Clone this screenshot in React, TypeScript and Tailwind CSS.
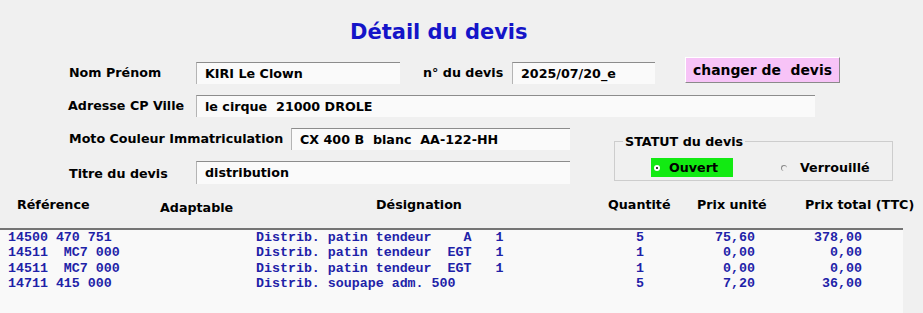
import React from 'react';

const lignes = [
  { ref: '14500 470 751', des: 'Distrib. patin tendeur    A   1', qte: '5', pu: '75,60', pt: '378,00' },
  { ref: '14511  MC7 000', des: 'Distrib. patin tendeur  EGT   1', qte: '1', pu: '0,00', pt: '0,00' },
  { ref: '14511  MC7 000', des: 'Distrib. patin tendeur  EGT   1', qte: '1', pu: '0,00', pt: '0,00' },
  { ref: '14711 415 000', des: 'Distrib. soupape adm. 500', qte: '5', pu: '7,20', pt: '36,00' },
];

function Champ({ value, className }: { value: string; className: string }) {
  return (
    <div
      className={`h-[22px] bg-[#fafafa] border-t border-l border-t-[#8c8c8c] border-l-[#b4b4b4] pl-[8px] leading-[21px] whitespace-pre ${className}`}
    >
      {value}
    </div>
  );
}

export default function App() {
  return (
    <div
      className="w-[923px] h-[313px] overflow-hidden bg-[#f0f0f0] text-black font-bold text-[12.7px]"
      style={{ fontFamily: '"DejaVu Sans", Verdana, sans-serif' }}
    >
      {/* Titre */}
      <h1 className="pt-[19px] pl-[350px] text-[21px] leading-[26px] text-[#1414c8] font-bold">Détail du devis</h1>

      {/* Nom / n° devis */}
      <div className="mt-[12px] flex items-start">
        <div className="mt-[5px] w-[196px] pl-[69px] leading-[22px]">Nom Prénom</div>
        <Champ value="KIRI Le Clown" className="mt-[5px] w-[204px]" />
        <div className="mt-[5px] ml-[23px] w-[89px] leading-[22px]">n° du devis</div>
        <Champ value="2025/07/20_e" className="mt-[5px] w-[143px]" />
        <button className="ml-[30px] w-[155px] h-[26px] bg-[#f7c3f7] border border-t-white border-l-white border-r-[#8a8a8a] border-b-[#8a8a8a] font-bold text-[13.9px] whitespace-pre leading-[22px]">
          changer de  devis
        </button>
      </div>

      {/* Adresse */}
      <div className="mt-[11px] flex items-center">
        <div className="w-[196px] pl-[68px]">Adresse CP Ville</div>
        <Champ value="le cirque  21000 DROLE" className="w-[619px]" />
      </div>

      <div className="flex">
        <div>
          <div className="mt-[11px] flex items-center">
            <div className="w-[291px] pl-[69px]">Moto Couleur Immatriculation</div>
            <Champ value="CX 400 B  blanc  AA-122-HH" className="w-[279px]" />
          </div>
          <div className="mt-[11px] flex items-center">
            <div className="w-[196px] pl-[69px] pt-[2px]">Titre du devis</div>
            <Champ value="distribution" className="w-[374px] h-[23px]" />
          </div>
        </div>

        {/* Statut */}
        <fieldset className="ml-[44px] mt-[17px] w-[279px] h-[47px] border border-[#cdcdcd]">
          <legend className="ml-[8px] px-[2px] leading-[15px]">STATUT du devis</legend>
          <div className="mt-[9px] flex items-center">
            <div className="ml-[36px] w-[82px] h-[19px] bg-[#12ea12] flex items-center">
              <span className="ml-[3px] w-[6px] h-[6px] rounded-full bg-white flex items-center justify-center">
                <span className="w-[2px] h-[2px] rounded-full bg-black" />
              </span>
              <span className="ml-[9px] leading-[19px]">Ouvert</span>
            </div>
            <span className="ml-[48px] w-[6px] h-[6px] rounded-full border-t border-l border-[#8a8a8a]" />
            <span className="ml-[13px] leading-[19px]">Verrouillé</span>
          </div>
        </fieldset>
      </div>

      {/* En-têtes */}
      <div className="mt-[13px] flex items-start pl-[17px] leading-[16px]">
        <div className="w-[143px]">Référence</div>
        <div className="w-[216px] mt-[3px]">Adaptable</div>
        <div className="w-[232px]">Désignation</div>
        <div className="w-[89px]">Quantité</div>
        <div className="w-[108px]">Prix unité</div>
        <div>Prix total (TTC)</div>
      </div>

      {/* Lignes */}
      <div className="mt-[12px] w-[903px] h-[100px] border-t-2 border-[#747474] bg-[#f9f9f9]">
        {lignes.map((l, i) => (
          <div
            key={i}
            className="flex whitespace-pre text-[#1e22a8] text-[13.3px] leading-[15.4px]"
            style={{ fontFamily: '"Liberation Mono", "Courier New", monospace' }}
          >
            <div className="w-[256px] pl-[8px]">{l.ref}</div>
            <div className="w-[380px]">{l.des}</div>
            <div className="w-[64px]">{l.qte}</div>
            <div className="w-[55px] text-right">{l.pu}</div>
            <div className="w-[107px] text-right">{l.pt}</div>
          </div>
        ))}
      </div>
    </div>
  );
}
